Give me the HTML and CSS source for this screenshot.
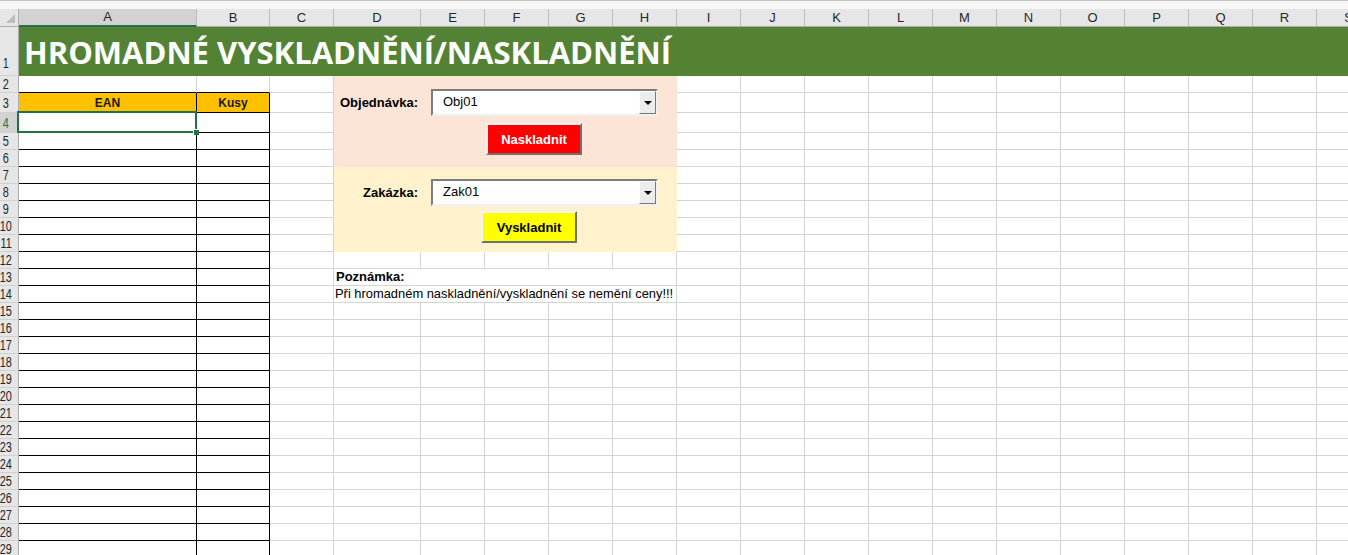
FILE: index.html
```html
<!DOCTYPE html>
<html lang="cs">
<head>
    <meta charset="UTF-8">
    <meta name="viewport" content="width=device-width, initial-scale=1.0">
    <title>Hromadné vyskladnění/naskladnění</title>
    <link rel="stylesheet" href="styles.css">
</head>
<body>
    <div class="topbar"></div>
    <div class="sheet" id="sheet">
        <div class="title">HROMADNÉ VYSKLADNĚNÍ/NASKLADNĚNÍ</div>

        <div class="panel panel-in">
            <div class="form-row">
                <label class="form-label">Objednávka:</label>
                <div class="combo">
                    <span class="combo-value">Obj01</span>
                    <span class="combo-btn"><i class="arrow"></i></span>
                </div>
            </div>
            <button class="btn btn-red">Naskladnit</button>
        </div>

        <div class="panel panel-out">
            <div class="form-row">
                <label class="form-label">Zakázka:</label>
                <div class="combo">
                    <span class="combo-value">Zak01</span>
                    <span class="combo-btn"><i class="arrow"></i></span>
                </div>
            </div>
            <button class="btn btn-yellow">Vyskladnit</button>
        </div>

        <div class="note note-head">Poznámka:</div>
        <div class="note note-text">Při hromadném naskladnění/vyskladnění se nemění ceny!!!</div>
    </div>

    <script>
        const cols = 'ABCDEFGHIJKLMNOPQRS'.split('');
        const sheet = document.getElementById('sheet');

        function add(cls, text) {
            const el = document.createElement('div');
            el.className = cls;
            if (text) el.textContent = text;
            sheet.appendChild(el);
            return el;
        }

        // cells that sit under the title, the form panels and the note
        function covered(r, c) {
            if (r === 1) return true;
            if (c >= 3 && c <= 7) {
                if (r >= 2 && r <= 11) return true;
                if (r === 13 || r === 14) return true;
            }
            return false;
        }

        add('corner');
        cols.forEach(function (l) {
            add('col-head' + (l === 'A' ? ' active' : ''), l);
        });

        for (let r = 1; r <= 30; r++) {
            let headCls = 'row-head';
            if (r === 1) headCls += ' tall';
            if (r === 4) headCls += ' active';
            const head = add(headCls);
            const num = document.createElement('span');
            num.textContent = r;
            head.appendChild(num);

            for (let c = 0; c < cols.length; c++) {
                if (covered(r, c)) continue;
                let cls = 'cell';
                let text = '';
                if (c <= 1 && r === 2) cls += ' tbl-top';
                if (c <= 1 && r >= 3) cls += ' tbl';
                if (c <= 1 && r === 3) {
                    cls += ' tbl-head';
                    text = c === 0 ? 'EAN' : 'Kusy';
                }
                const cell = add(cls, text);
                if (r === 4 && c === 0) {
                    const sel = document.createElement('div');
                    sel.className = 'sel-box';
                    cell.appendChild(sel);
                }
            }
        }
    </script>
</body>
</html>
```

FILE: styles.css
```css
body {
    margin: 0;
    padding: 0;
    width: 1348px;
    height: 555px;
    overflow: hidden;
    background: #fff;
    font-family: "Liberation Sans", Arial, sans-serif;
    font-size: 13px;
    color: #000;
}
.topbar {
    height: 9px;
    box-sizing: border-box;
    border-top: 1px solid #c6c6c6;
    background: #f7f7f7;
}
.sheet {
    display: grid;
    grid-template-columns: 19px 178px 73px 64px 87px repeat(15, 64px);
    grid-template-rows: 18px 49px 17px 20px 20px repeat(26, 17px);
}
.sheet > div {
    box-sizing: border-box;
    min-width: 0;
}

/* headers */
.corner {
    position: relative;
    background: #e6e6e6;
    border-right: 1px solid #ababab;
    border-bottom: 1px solid #ababab;
}
.corner::after {
    content: "";
    position: absolute;
    right: 3px;
    bottom: 3px;
    border-left: 9px solid transparent;
    border-bottom: 9px solid #bcbcbc;
}
.col-head {
    background: #e6e6e6;
    border-right: 1px solid #bdbdbd;
    border-bottom: 1px solid #ababab;
    text-align: center;
    line-height: 17px;
    color: #262626;
    font-size: 13px;
}
.col-head.active {
    background: #d2d2d2;
    border-bottom: 2px solid #217346;
    line-height: 16px;
}
.row-head {
    display: flex;
    align-items: center;
    justify-content: center;
    padding-right: 6px;
    background: #e6e6e6;
    border-right: 1px solid #ababab;
    border-bottom: 1px solid #d0d0d0;
    color: #262626;
    line-height: 16px;
    overflow: hidden;
}
.row-head.tall {
    align-items: flex-end;
    padding-bottom: 4px;
}
.row-head span {
    display: inline-block;
    font-size: 14px;
    transform: scaleX(0.78);
}
.row-head.active {
    background: #d2d2d2;
    color: #217346;
}

/* plain cells */
.cell {
    border-right: 1px solid #d4d4d4;
    border-bottom: 1px solid #d4d4d4;
}
.tbl-top {
    border-bottom-color: #000;
}
.tbl {
    border-right-color: #000;
    border-bottom-color: #000;
}
.tbl-head {
    display: flex;
    align-items: flex-end;
    justify-content: center;
    background: #ffc000;
    font-weight: bold;
    font-size: 12px;
    line-height: 17px;
    color: #1a1a1a;
}
.cell:has(.sel-box) {
    position: relative;
}
.sel-box {
    position: absolute;
    top: -2px;
    left: -2px;
    right: -1px;
    bottom: -1px;
    border: 2px solid #217346;
}
.sel-box::after {
    content: "";
    position: absolute;
    right: -4px;
    bottom: -4px;
    width: 5px;
    height: 5px;
    background: #217346;
    border: 1px solid #fff;
    border-width: 1px 0 0 1px;
}

/* title row */
.title {
    grid-column: 2 / -1;
    grid-row: 2;
    background: #548235;
    color: #fff;
    font-family: "Open Sans", "Liberation Sans", sans-serif;
    font-weight: 700;
    font-size: 31px;
    line-height: 44px;
    padding: 3px 0 0 5px;
    white-space: nowrap;
}

/* form panels */
.panel {
    grid-column: 5 / 10;
}
.panel-in {
    grid-row: 3 / 8;
    background: #fce4d6;
    padding-top: 13px;
}
.panel-out {
    grid-row: 8 / 13;
    background: #fff2cc;
    padding-top: 12px;
}
.form-row {
    display: flex;
    align-items: center;
    height: 27px;
}
.form-label {
    width: 84px;
    margin-right: 13px;
    text-align: right;
    font-weight: bold;
    font-size: 13px;
}
.combo {
    display: flex;
    width: 227px;
    height: 27px;
    box-sizing: border-box;
    background: #fff;
    border: 2px solid;
    border-color: #7c7c7c #f0f0f0 #f0f0f0 #7c7c7c;
}
.combo-value {
    flex: 1;
    padding-left: 10px;
    line-height: 22px;
    font-size: 13px;
}
.combo-btn {
    display: flex;
    align-items: center;
    justify-content: center;
    width: 17px;
    box-sizing: border-box;
    background: #ececec;
    border: 1px solid;
    border-color: #fdfdfd #7a7a7a #7a7a7a #fdfdfd;
}
.arrow {
    border-left: 4px solid transparent;
    border-right: 4px solid transparent;
    border-top: 4px solid #000;
}
.btn {
    display: block;
    width: 96px;
    height: 32px;
    box-sizing: border-box;
    padding: 0;
    border: 2px solid;
    border-color: #f4f4f4 #707070 #707070 #f4f4f4;
    font-family: "Liberation Sans", Arial, sans-serif;
    font-weight: bold;
    font-size: 13px;
}
.btn-red {
    margin: 7px 0 0 152px;
    background: #ff0000;
    color: #fff;
}
.btn-yellow {
    margin: 5px 0 0 147px;
    background: #ffff00;
    color: #000;
}

/* note under the panels */
.note {
    grid-column: 5 / 10;
    padding-left: 2px;
    border-right: 1px solid #d4d4d4;
    border-bottom: 1px solid #d4d4d4;
    line-height: 16px;
    white-space: nowrap;
    font-size: 13px;
}
.note-head {
    grid-row: 14;
    font-weight: bold;
}
.note-text {
    grid-row: 15;
    padding-left: 1px;
    font-size: 12.9px;
}
```
